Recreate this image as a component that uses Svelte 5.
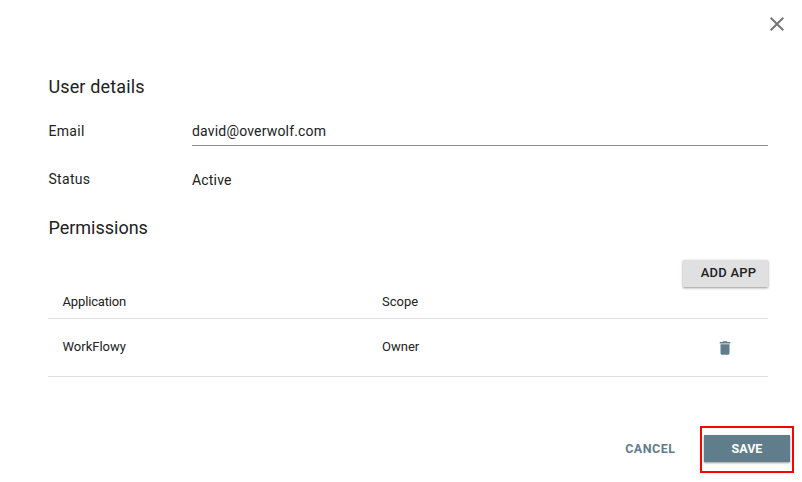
<script>
  let email = $state('david@overwolf.com');
  const permissions = [{ app: 'WorkFlowy', scope: 'Owner' }];
</script>

<main class="dialog">
  <header>
    <button class="close" aria-label="Close">
      <svg width="24" height="24" viewBox="0 0 24 24"><path d="M19 6.41 17.59 5 12 10.59 6.41 5 5 6.41 10.59 12 5 17.59 6.41 19 12 13.41 17.59 19 19 17.59 13.41 12z" fill="#757575" /></svg>
    </button>
  </header>

  <section class="details">
    <h2>User details</h2>
    <div class="field">
      <label for="email">Email</label>
      <input id="email" bind:value={email} />
    </div>
    <div class="field status">
      <span class="label">Status</span>
      <span class="value">Active</span>
    </div>
  </section>

  <section class="permissions">
    <h2 class="tight">Permissions</h2>
    <div class="toolbar"><button class="add">ADD APP</button></div>
    <div class="row head"><span>Application</span><span>Scope</span><span></span></div>
    {#each permissions as item}
      <div class="row item">
        <span>{item.app}</span>
        <span>{item.scope}</span>
        <button class="trash" aria-label="Delete">
          <svg width="18" height="18" viewBox="0 0 24 24"><path d="M6 19c0 1.1.9 2 2 2h8c1.1 0 2-.9 2-2V7H6v12zM19 4h-3.5l-1-1h-5l-1 1H5v2h14V4z" fill="#607d8b" /></svg>
        </button>
      </div>
    {/each}
  </section>

  <footer>
    <button class="cancel">CANCEL</button>
    <div class="highlight"><button class="save">SAVE</button></div>
  </footer>
</main>

<style>
  :global(body) { background: #fff; overflow: hidden; }
  .dialog {
    box-sizing: border-box;
    width: 802px;
    height: 482px;
    display: flex;
    flex-direction: column;
    font-family: Roboto, "Liberation Sans", sans-serif;
    color: #212121;
  }
  button { border: 0; padding: 0; background: none; font: inherit; }
  svg { display: block; }
  header { height: 72px; padding: 12px 13.5px 0 0; box-sizing: border-box; display: flex; justify-content: flex-end; align-items: flex-start; }
  section { padding: 0 34px 0 48px; }
  h2 { margin: 0; font-size: 18px; font-weight: 400; line-height: 30px; letter-spacing: 0.15px; height: 30px; text-indent: 0.4px; }
  h2.tight { letter-spacing: 0; }
  .details { height: 141px; }
  .field { display: grid; grid-template-columns: 144px 1fr; font-size: 14px; letter-spacing: 0.18px; line-height: 20px; }
  .field label, .field .label { text-indent: 0.5px; letter-spacing: 0.3px; }
  .field:nth-child(2) { margin-top: 19px; }
  input {
    box-sizing: border-box; width: 100%; height: 25px; padding: 0 0 5px; border: 0;
    border-bottom: 1px solid #8b8b8b; outline: 0; font: inherit; color: inherit; letter-spacing: inherit; background: none;
  }
  .status { margin-top: 23px; }
  .status .value { padding-top: 1px; }
  .toolbar { display: flex; justify-content: flex-end; height: 42px; padding-top: 17px; box-sizing: border-box; }
  .add {
    width: 85px; height: 27px; flex: none; padding: 0 0 2px 6px; background: #e0e0e0; color: #212121; box-sizing: border-box;
    font-size: 13px; font-weight: 500; letter-spacing: 0.2px; line-height: 24px;
    box-shadow: 0 1px 2px rgba(0, 0, 0, 0.35), 0 1px 4px rgba(0, 0, 0, 0.1);
  }
  .row { display: grid; grid-template-columns: 319.5px 1fr 52.5px; padding-left: 14.5px; font-size: 13px; border-bottom: 1px solid #e0e0e0; box-sizing: border-box; }
  .head { height: 34px; line-height: 34px; }
  .head span:first-child { letter-spacing: -0.15px; }
  .item { height: 58px; line-height: 56px; }
  .trash { height: 18px; margin-top: 20px; }
  footer { display: flex; justify-content: flex-end; align-items: center; margin-top: 49px; padding-right: 8px; gap: 24.5px; }
  .cancel, .save { font-size: 12.5px; font-weight: 700; }
  .cancel { color: #607d8b; padding-bottom: 2px; letter-spacing: 0.5px; }
  .highlight { box-sizing: border-box; width: 94px; height: 47px; border: 2px solid #f00; padding: 7px 2px; }
  .save { width: 86px; height: 27px; display: block; background: #607d8b; color: #fff; box-shadow: 0 1px 2px rgba(0, 0, 0, 0.4); }
</style>
